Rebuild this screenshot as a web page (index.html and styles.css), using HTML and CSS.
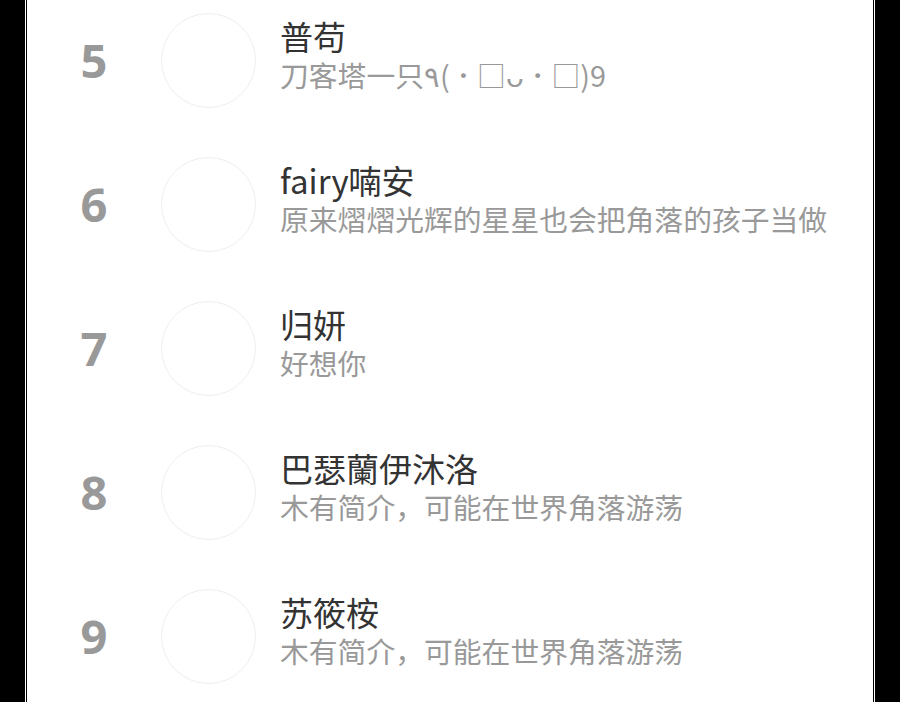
FILE: index.html
```html
<!DOCTYPE html>
<html lang="zh-CN">
<head>
    <meta charset="UTF-8">
    <meta name="viewport" content="width=device-width, initial-scale=1.0">
    <title>排行榜</title>
    <link rel="stylesheet" href="styles.css">
</head>
<body>

<div class="frame">
    <ul class="rank-list">
        <li class="rank-row">
            <span class="rank-num">5</span>
            <div class="avatar"></div>
            <div class="info">
                <p class="name">普苟</p>
                <p class="bio">刀客塔一只٩( ･ □ᴗ ･ □)9</p>
            </div>
        </li>
        <li class="rank-row">
            <span class="rank-num">6</span>
            <div class="avatar"></div>
            <div class="info">
                <p class="name">fairy喃安</p>
                <p class="bio">原来熠熠光辉的星星也会把角落的孩子当做</p>
            </div>
        </li>
        <li class="rank-row">
            <span class="rank-num">7</span>
            <div class="avatar"></div>
            <div class="info">
                <p class="name">归妍</p>
                <p class="bio">好想你</p>
            </div>
        </li>
        <li class="rank-row">
            <span class="rank-num">8</span>
            <div class="avatar"></div>
            <div class="info">
                <p class="name">巴瑟蘭伊沐洛</p>
                <p class="bio">木有简介，可能在世界角落游荡</p>
            </div>
        </li>
        <li class="rank-row">
            <span class="rank-num">9</span>
            <div class="avatar"></div>
            <div class="info">
                <p class="name">苏筱桉</p>
                <p class="bio">木有简介，可能在世界角落游荡</p>
            </div>
        </li>
    </ul>
</div>

</body>
</html>
```

FILE: styles.css
```css
/* Page shell */
body {
    margin: 0;
    background-color: #000;
    font-family: "Noto Sans CJK SC", "Noto Sans", sans-serif;
    overflow: hidden;
}

.frame {
    margin: 0 25px;
    min-height: 100vh;
    border: 1px solid #fff;
    border-top: none;
    border-bottom: none;
}

/* Ranking list (scrolled a little past the top) */
.rank-list {
    list-style: none;
    margin: -12px 0 0;
    padding: 0;
    min-height: 100vh;
    background-color: #fff;
    border: 1px solid #000;
    border-top: none;
    border-bottom: none;
}

.rank-row {
    display: flex;
    align-items: center;
    height: 144px;
}

.rank-num {
    width: 134px;
    flex-shrink: 0;
    text-align: center;
    font-family: "Open Sans", "Liberation Sans", sans-serif;
    font-size: 47px;
    font-weight: bold;
    line-height: 1;
    color: #999;
}

.avatar {
    width: 95px;
    height: 95px;
    flex-shrink: 0;
    box-sizing: border-box;
    border: 1px solid #eeeeee;
    border-radius: 50%;
    background-color: #fff;
}

.info {
    align-self: flex-start;
    padding-top: 28px;
    margin-left: 24px;
    min-width: 0;
    overflow: hidden;
}

.info p {
    margin: 0;
    white-space: nowrap;
}

.name {
    font-size: 33px;
    line-height: 40px;
    color: #333;
}

.bio {
    font-size: 28.8px;
    line-height: 38px;
    margin-top: 1px;
    color: #999;
}
```
